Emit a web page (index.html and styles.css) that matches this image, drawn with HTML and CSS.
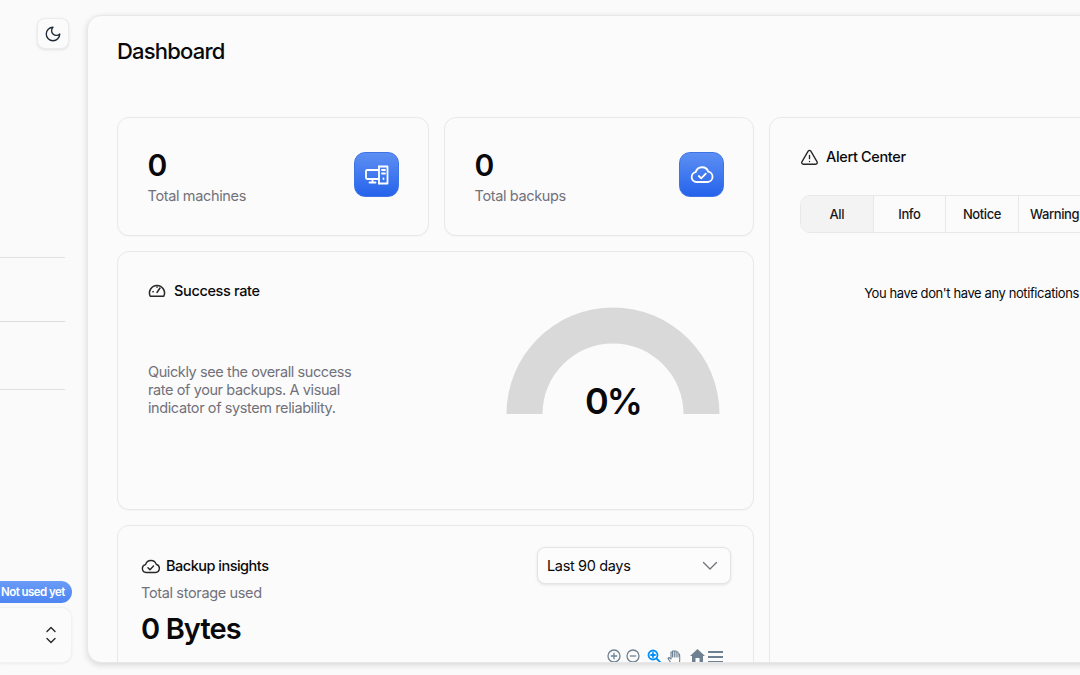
FILE: index.html
```html
<!DOCTYPE html>
<html lang="en">
<head>
<meta charset="utf-8">
<title>Dashboard</title>
<link rel="stylesheet" href="styles.css">
</head>
<body>
<div class="app">
  <aside class="sidebar">
    <button class="theme-btn" aria-label="Theme">
      <svg width="18" height="18" viewBox="0 0 24 24" fill="none" stroke="#1f2937" stroke-width="1.800" stroke-linecap="round" stroke-linejoin="round"><path d="M12 3a6 6 0 0 0 9 9 9 9 0 1 1-9-9Z"/></svg>
    </button>
    <div class="rule rule-a"></div>
    <div class="rule rule-b"></div>
    <div class="rule rule-c"></div>
    <div class="side-spacer"></div>
    <span class="pill">Not used yet</span>
    <div class="account">
      <svg width="12" height="20" viewBox="0 0 12 20" fill="none" stroke="#27272a" stroke-width="1.4" stroke-linecap="round" stroke-linejoin="round"><path d="M2 6.500 6 2.500l4 4M2 13.500l4 4 4-4"/></svg>
    </div>
  </aside>
  <main class="panel">
    <h1 class="page-title">Dashboard</h1>
    <div class="grid">
      <div class="left-col">
        <div class="stat-row">
          <section class="card stat">
            <div>
              <div class="stat-num">0</div>
              <div class="muted stat-label">Total machines</div>
            </div>
            <div class="stat-icon">
              <svg width="26" height="26" viewBox="0 0 26 26" fill="none" stroke="#fff" stroke-width="1.800" stroke-linejoin="round" stroke-linecap="round"><rect x="2" y="8" width="13" height="9" rx="1.2"/><path d="M8.500 17v3M5.500 20.500h6"/><path d="M15 4.500h8.500v17H15"/><path d="M15 4.500V8M15 17v4.500M18 8h3M18 11.500h3M19.500 16.500v.5"/></svg>
            </div>
          </section>
          <section class="card stat">
            <div>
              <div class="stat-num">0</div>
              <div class="muted stat-label">Total backups</div>
            </div>
            <div class="stat-icon">
              <svg width="26" height="26" viewBox="0 0 26 26" fill="none" stroke="#fff" stroke-width="1.800" stroke-linecap="round" stroke-linejoin="round"><path d="M7.500 20a5 5 0 0 1-.8-9.900 6.600 6.600 0 0 1 12.600-.4 5.200 5.200 0 0 1-.6 10.300Z"/><path d="m9.800 14 2.400 2.300 4.600-4.600"/></svg>
            </div>
          </section>
        </div>
        <section class="card success">
          <h2 class="card-title">
            <svg width="18" height="18" viewBox="0 0 24 24" fill="none" stroke="#27272a" stroke-width="2" stroke-linecap="round" stroke-linejoin="round"><path d="M3 19a10 10 0 1 1 18 0Z"/><path d="m12 14 4-6M6.500 13H7M12 6.500V7"/></svg>
            Success rate
          </h2>
          <div class="success-body">
            <p class="success-text">Quickly see the overall success rate of your backups. A visual indicator of system reliability.</p>
            <div class="gauge">
              <svg width="214" height="107" viewBox="0 0 214 107"><path d="M0.500 107a106.500 106.500 0 0 1 213 0h-36a70.500 70.500 0 0 0-141 0Z" fill="#d9d9d9"/></svg>
              <span class="gauge-value">0%</span>
            </div>
          </div>
        </section>
        <section class="card insights">
          <div class="insights-head">
            <div>
              <h2 class="card-title insights-title">
                <svg width="19" height="19" viewBox="0 0 24 24" fill="none" stroke="#27272a" stroke-width="1.800" stroke-linecap="round" stroke-linejoin="round"><path d="M6.500 19.500a5 5 0 0 1-.7-9.900 7 7 0 0 1 13.400-.5 5.300 5.300 0 0 1-.7 10.400Z"/><path d="m8.800 13.500 2.500 2.500 4.500-4.600"/></svg>
                Backup insights
              </h2>
              <div class="muted storage">Total storage used</div>
              <div class="bytes">0 Bytes</div>
            </div>
            <div class="select">
              <span>Last 90 days</span>
              <svg width="16" height="10" viewBox="0 0 16 10" fill="none" stroke="#71717a" stroke-width="1.300" stroke-linecap="round" stroke-linejoin="round"><path d="m1.500 1.500 6.500 6.500 6.500-6.500"/></svg>
            </div>
          </div>
          <div class="toolbar">
            <svg class="tool" width="14" height="14" viewBox="0 0 14 14" fill="none" stroke="#6e8192" stroke-width="1.300"><circle cx="7" cy="7" r="6"/><path d="M3.800 7h6.400M7 3.800v6.400"/></svg>
            <svg class="tool" width="14" height="14" viewBox="0 0 14 14" fill="none" stroke="#6e8192" stroke-width="1.300"><circle cx="7" cy="7" r="6"/><path d="M3.800 7h6.400"/></svg>
            <svg class="tool tool-zoom" width="15" height="15" viewBox="0 0 15 15" fill="none" stroke="#008ffb" stroke-width="1.800" stroke-linecap="round"><circle cx="6" cy="6" r="4.500"/><path d="m9.500 9.500 4.500 4.500M4 6h4M6 4v4"/></svg>
            <svg class="tool" width="15" height="15" viewBox="0 0 15 15" fill="none" stroke="#6e8192" stroke-width="1.100" stroke-linejoin="round"><path d="M4 14 1 9.500l1-1 2 1.500V3h1.500v5-6h1.800v6-6h1.800v6-5H11v5-3h1.500c.3 3 .3 6 0 8l-1 3Z"/></svg>
            <svg class="tool tool-home" width="15" height="14" viewBox="0 0 15 14"><path d="M7.500 0 15 7h-2v7H9.500V9h-4v5H2V7H0Z" fill="#6e8192"/></svg>
            <svg class="tool tool-menu" width="15" height="12" viewBox="0 0 15 12"><path d="M0 0h15v2H0zM0 5h15v2H0zM0 10h15v2H0z" fill="#6e8192"/></svg>
          </div>
        </section>
      </div>
      <section class="card alerts">
        <h2 class="card-title alerts-title">
          <svg width="19" height="19" viewBox="0 0 24 24" fill="none" stroke="#27272a" stroke-width="1.700" stroke-linecap="round" stroke-linejoin="round"><path d="M10.300 3.900 2.400 17.500A2 2 0 0 0 4.100 20.500h15.800a2 2 0 0 0 1.700-3L13.700 3.900a2 2 0 0 0-3.400 0Z"/><path d="M12 9.500v4M12 17h.01"/></svg>
          Alert Center
        </h2>
        <div class="tabs">
          <span class="tab tab-active">All</span>
          <span class="tab">Info</span>
          <span class="tab">Notice</span>
          <span class="tab">Warning</span>
          <span class="tab">Critical</span>
        </div>
        <p class="empty">You have don't have any notifications yet</p>
      </section>
    </div>
  </main>
</div>
</body>
</html>
```
FILE: styles.css
```css
* { box-sizing: border-box; }
html, body { margin: 0; height: 100%; overflow: hidden; }
body {
  background: #fafafa;
  color: #09090b;
  font-family: Inter, "Liberation Sans", sans-serif;
}
.app { display: flex; width: 1080px; height: 675px; overflow: hidden; }

.sidebar {
  flex: none;
  width: 87px;
  height: 675px;
  padding: 18px 15px 12px 0;
  display: flex;
  flex-direction: column;
  align-items: stretch;
}
.theme-btn {
  align-self: flex-end;
  width: 32px;
  height: 31px;
  margin-right: 3px;
  padding: 0;
  display: flex;
  align-items: center;
  justify-content: center;
  background: #fbfbfb;
  border: 1px solid #ececec;
  border-radius: 8px;
  box-shadow: 0 1px 3px rgba(0,0,0,.1);
}
.rule { height: 1px; margin-right: 7px; background: #e2e2e2; }
.rule-a { margin-top: 208px; }
.rule-b { margin-top: 63px; background: #dcdcdc; }
.rule-c { margin-top: 67px; }
.side-spacer { flex: 1; }
.pill {
  align-self: flex-end;
  width: 82px;
  height: 22px;
  padding-left: 11px;
  border-radius: 11px;
  background: linear-gradient(#6a9bf6, #4d85f3);
  color: #fff;
  font-size: 11.500px;
  font-weight: 600;
  line-height: 22px;
  letter-spacing: -.55px;
  white-space: nowrap;
}
.account {
  height: 56px;
  margin-top: 4px;
  padding-right: 14px;
  display: flex;
  align-items: center;
  justify-content: flex-end;
  background: #fbfbfb;
  border: 1px solid #f1f1f1;
  border-left: 0;
  border-radius: 0 10px 10px 0;
  box-shadow: 0 1px 3px rgba(0,0,0,.06);
}

.panel {
  flex: none;
  width: 1138px;
  height: 648px;
  margin-top: 15px;
  padding: 0 29px;
  overflow: hidden;
  background: #fbfbfb;
  border: 1px solid #e8e8e8;
  border-radius: 14px;
  box-shadow: 0 2px 6px rgba(0,0,0,.14);
}
.page-title {
  margin: 22px 0 52px;
  height: 27px;
  font-size: 22px;
  font-weight: 500;
  line-height: 27px;
  letter-spacing: -.8px;
}
.grid {
  display: grid;
  grid-template-columns: 637px 426px;
  column-gap: 15px;
}
.left-col { display: flex; flex-direction: column; gap: 15px; }
.card {
  background: #fbfbfb;
  border: 1px solid #e8e8e8;
  border-radius: 12px;
  box-shadow: 0 1px 1px rgba(0,0,0,.03);
}
.stat-row { display: grid; grid-template-columns: 312px 310px; column-gap: 15px; }
.stat {
  height: 119px;
  padding: 0 29px 0 29.500px;
  display: flex;
  align-items: center;
  justify-content: space-between;
}
.stat-num {
  font-size: 30px;
  font-weight: 600;
  line-height: 36px;
}
.stat-label { margin-top: 2px; }
.muted { color: #71717a; font-size: 14.500px; line-height: 22px; letter-spacing: -.35px; }
.stat-icon {
  width: 45px;
  height: 45px;
  margin-bottom: 4px;
  display: flex;
  align-items: center;
  justify-content: center;
  border-radius: 11px;
  border: 1px solid #3e74e6;
  background: linear-gradient(#5d8ff3, #2563eb);
}
.card-title {
  margin: 0;
  display: flex;
  align-items: center;
  gap: 8px;
  font-size: 14.500px;
  font-weight: 500;
  line-height: 20px;
  letter-spacing: -.35px;
}
.success { height: 259px; padding: 29px 33px 0 30px; }
.success-body {
  display: flex;
  justify-content: space-between;
  margin-top: 6px;
}
.success-text {
  width: 222px;
  margin: 56px 0 0;
  color: #71717a;
  font-size: 14.500px;
  line-height: 18px;
  letter-spacing: -.4px;
}
.gauge { position: relative; width: 214px; height: 107px; }
.gauge svg { display: block; }
.gauge-value {
  position: absolute;
  left: 0;
  right: 0;
  top: 72px;
  text-align: center;
  font-size: 36px;
  font-weight: 600;
  line-height: 44px;
  letter-spacing: -2px;
}
.insights { height: 200px; padding: 21px 22px 0 23px; }
.insights-head { display: flex; justify-content: space-between; align-items: flex-start; }
.insights-title { margin-top: 9px; gap: 6px; letter-spacing: -.5px; }
.storage { margin-top: 6px; }
.bytes {
  margin-top: 7px;
  font-size: 29px;
  font-weight: 600;
  line-height: 36px;
  letter-spacing: -.9px;
}
.select {
  width: 194px;
  height: 37px;
  padding: 0 12px 0 9px;
  display: flex;
  align-items: center;
  justify-content: space-between;
  background: #fcfcfc;
  border: 1px solid #e4e4e4;
  border-radius: 8px;
  box-shadow: 0 1px 3px rgba(0,0,0,.1);
  font-size: 14.500px;
  letter-spacing: -.35px;
}
.toolbar {
  display: flex;
  justify-content: flex-end;
  align-items: flex-start;
  gap: 5px;
  margin: 2px 8px 0 0;
}
.tool { flex: none; }
.tool-zoom { margin-left: 2px; }
.tool-home { margin-left: 3px; }
.tool-menu { margin-left: -2px; margin-top: 2px; }
.alerts { height: 560px; padding: 29px 30px 0; }
.alerts-title { gap: 7px; }
.tabs {
  display: flex;
  margin-top: 28px;
  height: 38px;
  border: 1px solid #e8e8e8;
  border-radius: 10px;
  overflow: hidden;
}
.tab {
  flex: 1;
  border-right: 1px solid #e8e8e8;
  display: flex;
  align-items: center;
  justify-content: center;
  font-size: 13px;
  font-weight: 500;
  letter-spacing: -.4px;
  color: #18181b;
}
.tab:last-child { border-right: 0; }
.tab-active { background: #f3f3f3; }
.empty {
  margin: 50px 0 0;
  text-align: center;
  font-size: 13px;
  font-weight: 400;
  line-height: 20px;
  letter-spacing: -.4px;
}
```
